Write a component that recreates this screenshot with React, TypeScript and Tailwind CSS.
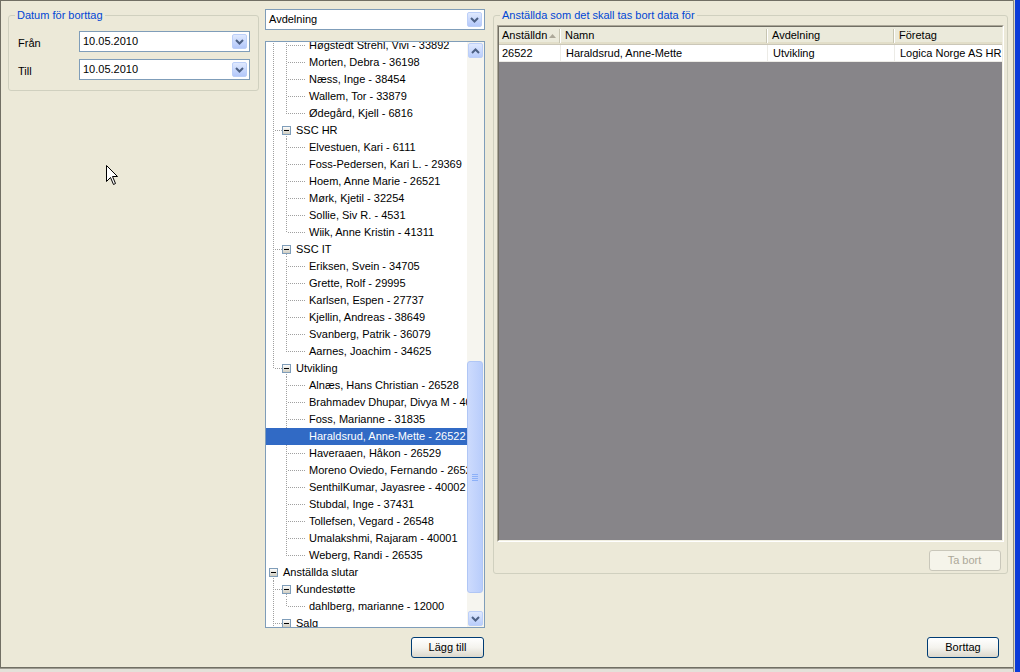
import React from "react"

type Row = { d: number; t: string; box?: boolean; last?: boolean; anc?: boolean[]; sel?: boolean }

const leaf = (t: string, last = false, anc: boolean[] = [true], sel = false): Row => ({ d: 2, t, last, anc, sel })

const rows: Row[] = [
  leaf("Høgstedt Strehl, Vivi - 33892"),
  leaf("Morten, Debra - 36198"),
  leaf("Næss, Inge - 38454"),
  leaf("Wallem, Tor - 33879"),
  leaf("Ødegård, Kjell - 6816", true),
  { d: 1, t: "SSC HR", box: true },
  leaf("Elvestuen, Kari - 6111"),
  leaf("Foss-Pedersen, Kari L. - 29369"),
  leaf("Hoem, Anne Marie - 26521"),
  leaf("Mørk, Kjetil - 32254"),
  leaf("Sollie, Siv R. - 4531"),
  leaf("Wiik, Anne Kristin - 41311", true),
  { d: 1, t: "SSC IT", box: true },
  leaf("Eriksen, Svein - 34705"),
  leaf("Grette, Rolf - 29995"),
  leaf("Karlsen, Espen - 27737"),
  leaf("Kjellin, Andreas - 38649"),
  leaf("Svanberg, Patrik - 36079"),
  leaf("Aarnes, Joachim - 34625", true),
  { d: 1, t: "Utvikling", box: true, last: true },
  leaf("Alnæs, Hans Christian - 26528", false, [false]),
  leaf("Brahmadev Dhupar, Divya M - 40004", false, [false]),
  leaf("Foss, Marianne - 31835", false, [false]),
  leaf("Haraldsrud, Anne-Mette - 26522", false, [false], true),
  leaf("Haveraaen, Håkon - 26529", false, [false]),
  leaf("Moreno Oviedo, Fernando - 26527", false, [false]),
  leaf("SenthilKumar, Jayasree - 40002", false, [false]),
  leaf("Stubdal, Inge - 37431", false, [false]),
  leaf("Tollefsen, Vegard - 26548", false, [false]),
  leaf("Umalakshmi, Rajaram - 40001", false, [false]),
  leaf("Weberg, Randi - 26535", true, [false]),
  { d: 0, t: "Anställda slutar", box: true },
  { d: 1, t: "Kundestøtte", box: true },
  leaf("dahlberg, marianne - 12000", true),
  { d: 1, t: "Salg", box: true },
]

function Gutter({ row, i }: { row: Row; i: number }) {
  const U = 13
  const w = U * (row.d + 1)
  if (row.sel) return <div className="shrink-0" style={{ width: w }} />
  const ln = {
    stroke: "#a0a0a0",
    strokeDasharray: "1 1",
    strokeDashoffset: i % 2,
    shapeRendering: "crispEdges" as const,
  }
  const parts: React.ReactNode[] = []
  ;(row.anc ?? []).forEach((on, k) => {
    if (on) parts.push(<line key={`a${k}`} x1={k * U + 6.5} y1={0} x2={k * U + 6.5} y2={17} {...ln} />)
  })
  if (row.d >= 1) {
    const cx = (row.d - 1) * U + 6.5
    parts.push(<line key="v" x1={cx} y1={0} x2={cx} y2={row.last ? 9 : 17} {...ln} />)
    parts.push(
      <line key="h" x1={cx + 1} y1={8.5} x2={row.box ? row.d * U + 2 : row.d * U + 12} y2={8.5} {...ln} strokeDashoffset={0} />,
    )
  }
  if (row.box) {
    const bx = row.d * U + 2
    parts.push(<line key="down" x1={row.d * U + 6.5} y1={13} x2={row.d * U + 6.5} y2={17} {...ln} />)
    parts.push(
      <rect key="b" x={bx + 0.5} y={4.5} width={8} height={8} fill="url(#tvbox)" stroke="#7f9db9" shapeRendering="crispEdges" />,
    )
    parts.push(
      <line key="m" x1={bx + 2} y1={8.5} x2={bx + 7} y2={8.5} stroke="#000" shapeRendering="crispEdges" />,
    )
  }
  return (
    <svg width={w} height={17} className="shrink-0">
      <defs>
        <linearGradient id="tvbox" x1="0" y1="0" x2="0" y2="1">
          <stop offset="0" stopColor="#ffffff" />
          <stop offset="1" stopColor="#cdcabd" />
        </linearGradient>
      </defs>
      {parts}
    </svg>
  )
}

function Chevron({ up = false }: { up?: boolean }) {
  return (
    <svg width="9" height="6" viewBox="0 0 9 6">
      <polyline points={up ? "1,5 4.5,1.5 8,5" : "1,1 4.5,4.5 8,1"} fill="none" stroke="#4d6185" strokeWidth="2" />
    </svg>
  )
}

function DropBtn() {
  return (
    <div className="mr-[2px] flex h-[15px] w-[15px] shrink-0 items-center justify-center rounded-[2px] border border-[#bccff8] bg-linear-to-b from-[#e0e9fe] to-[#b3c8fa]">
      <Chevron />
    </div>
  )
}

function Combo({ text, className }: { text: string; className: string }) {
  return (
    <div className={`flex h-[21px] items-center border border-[#7f9db9] bg-white ${className}`}>
      <span className="flex-1 truncate pl-[3px]">{text}</span>
      <DropBtn />
    </div>
  )
}

function ScrollBtn({ up = false }: { up?: boolean }) {
  return (
    <div className="h-[17px] shrink-0 p-[1px]">
      <div className="flex h-full items-center justify-center rounded-[2px] border border-[#bccff8] bg-linear-to-b from-[#e0e9fe] to-[#b9cdfb]">
        <Chevron up={up} />
      </div>
    </div>
  )
}

function XpButton({ label, disabled = false, className = "" }: { label: string; disabled?: boolean; className?: string }) {
  if (disabled)
    return (
      <div className={`flex h-[21px] w-[72px] items-center justify-center rounded-[3px] border border-[#c9c7ba] bg-[#f5f4ea] text-[#aca899] ${className}`}>
        {label}
      </div>
    )
  return (
    <div className={`flex h-[21px] items-center justify-center rounded-[3px] border border-[#003c74] bg-linear-to-b from-white via-[#f4f3ee] to-[#dcd8cc] ${className}`}>
      {label}
    </div>
  )
}

function Tree() {
  return (
    <div className="mt-[11px] flex h-[587px] border border-[#7f9db9] bg-white">
      <div className="flex-1 overflow-hidden">
        <div className="-mt-[5px] pl-[1px]">
          {rows.map((r, i) => (
            <div
              key={i}
              className={`flex h-[17px] items-center whitespace-nowrap ${r.sel ? "-ml-[1px] bg-[#316ac5] pl-[1px] text-white" : ""}`}
            >
              <Gutter row={r} i={i} />
              <span className="pl-[3px]">{r.t}</span>
            </div>
          ))}
        </div>
      </div>
      <div className="flex w-[17px] shrink-0 flex-col bg-[#f6f5ef]">
        <ScrollBtn up />
        <div className="h-[302px] shrink-0" />
        <div className="flex h-[232px] shrink-0 items-center justify-center rounded-[3px] border border-[#b0c6f5] bg-linear-to-r from-[#cddbfd] to-[#b9cdfb] mr-[1px]">
          <div className="flex flex-col gap-[1px]">
            <div className="h-[1px] w-[6px] bg-[#8cb0f8]" />
            <div className="h-[1px] w-[6px] bg-[#8cb0f8]" />
            <div className="h-[1px] w-[6px] bg-[#8cb0f8]" />
            <div className="h-[1px] w-[6px] bg-[#8cb0f8]" />
          </div>
        </div>
        <div className="flex-1" />
        <ScrollBtn />
      </div>
    </div>
  )
}

function HeadSep() {
  return (
    <div className="flex h-[14px] shrink-0">
      <div className="w-[1px] bg-[#c7c5b2]" />
      <div className="w-[1px] bg-white" />
    </div>
  )
}

function Grid() {
  return (
    <div className="h-[517px] border border-b-white border-l-[#aca899] border-r-white border-t-[#aca899]">
      <div className="flex h-full flex-col border border-b-[#f1efe2] border-l-[#716f64] border-r-[#f1efe2] border-t-[#716f64] bg-[#878589]">
        <div className="flex h-[18px] shrink-0 items-center border-b border-[#cbc7b8] bg-[#ebeadb] shadow-[inset_0_-2px_0_#e2dec9]">
          <div className="flex w-[62px] shrink-0 items-center">
            <span className="pl-[3px]">Anställdn</span>
            <svg width="7" height="4" viewBox="0 0 7 4" className="ml-auto mr-[3px]">
              <polygon points="0,4 3.5,0 7,4" fill="#aca899" />
            </svg>
            <HeadSep />
          </div>
          <div className="flex w-[207px] shrink-0 items-center">
            <span className="flex-1 pl-[4px]">Namn</span>
            <HeadSep />
          </div>
          <div className="flex w-[127px] shrink-0 items-center">
            <span className="flex-1 pl-[4px]">Avdelning</span>
            <HeadSep />
          </div>
          <div className="flex min-w-0 flex-1 items-center">
            <span className="flex-1 pl-[4px]">Företag</span>
          </div>
        </div>
        <div className="flex h-[17px] shrink-0 items-center whitespace-nowrap border-b border-[#ecebe6] bg-white">
          <div className="flex h-full w-[62px] shrink-0 items-center border-r border-[#ecebe6] pl-[3px]">26522</div>
          <div className="flex h-full w-[207px] shrink-0 items-center border-r border-[#ecebe6] pl-[5px]">Haraldsrud, Anne-Mette</div>
          <div className="flex h-full w-[127px] shrink-0 items-center border-r border-[#ecebe6] pl-[5px]">Utvikling</div>
          <div className="flex h-full min-w-0 flex-1 items-center overflow-hidden pl-[5px]">Logica Norge AS HR</div>
        </div>
      </div>
    </div>
  )
}

export default function App() {
  return (
    <div className="relative flex h-[672px] w-[1020px] overflow-hidden bg-[#ece9d8] font-['Liberation_Sans',Arial,sans-serif] text-[11px] leading-[13px] text-black">
      <div className="flex w-[1013px] shrink-0 flex-col">
        <div className="flex h-[667px] border-l border-t border-[#716f64]">
          {/* left column */}
          <div className="w-[258px] shrink-0">
            <fieldset className="ml-[7px] mt-[8px] w-[251px] rounded-[3px] border border-[#d0d0bf]">
              <legend className="ml-[6px] px-[2px] leading-[13px] text-[#0046d5]">Datum för borttag</legend>
              <div className="flex flex-col gap-[7px] pb-[10px] pl-[9px] pr-[8px] pt-[9px]">
                <div className="flex items-center">
                  <span className="w-[61px] pt-[4px]">Från</span>
                  <Combo text="10.05.2010" className="w-[171px]" />
                </div>
                <div className="flex items-center">
                  <span className="w-[61px] pt-[4px]">Till</span>
                  <Combo text="10.05.2010" className="w-[171px]" />
                </div>
              </div>
            </fieldset>
          </div>

          {/* tree column */}
          <div className="ml-[6px] flex w-[220px] shrink-0 flex-col">
            <Combo text="Avdelning" className="mt-[8px] w-[220px]" />
            <Tree />
            <XpButton label="Lägg till" className="mr-[1px] mt-[9px] w-[73px] self-end" />
          </div>

          {/* right column */}
          <div className="ml-[8px] flex w-[513px] shrink-0 flex-col">
            <fieldset className="mt-[8px] rounded-[3px] border border-[#d0d0bf]">
              <legend className="ml-[6px] px-[2px] leading-[13px] text-[#0046d5]">Anställda som det skall tas bort data för</legend>
              <div className="flex flex-col px-[3px] pb-[2px] pt-[3px]">
                <Grid />
                <XpButton disabled label="Ta bort" className="mr-[3px] mt-[8px] self-end" />
              </div>
            </fieldset>
            <XpButton label="Borttag" className="mr-[7px] mt-[63px] w-[72px] self-end" />
          </div>
        </div>
        <div className="h-[1px] bg-[#716f64]" />
        <div className="h-[1px] bg-[#9d9b90]" />
        <div className="flex-1 bg-[#e3e1d9]" />
      </div>
      <div className="w-[1px] shrink-0 bg-[#8f8d82]" />
      <div className="w-[1px] shrink-0 bg-[#d8d5c8]" />
      <div className="w-[5px] shrink-0 bg-[#0b3bd8]" />

      {/* mouse pointer */}
      <svg width="13" height="21" viewBox="0 0 13 21" className="absolute left-[106px] top-[165px]">
        <polygon
          points="0.5,0.5 0.5,16.5 4.5,12.5 7.5,19.5 9.5,18.5 6.5,11.5 11.5,11.5"
          fill="#fff"
          stroke="#000"
          strokeWidth="1"
          strokeLinejoin="miter"
        />
      </svg>
    </div>
  )
}
